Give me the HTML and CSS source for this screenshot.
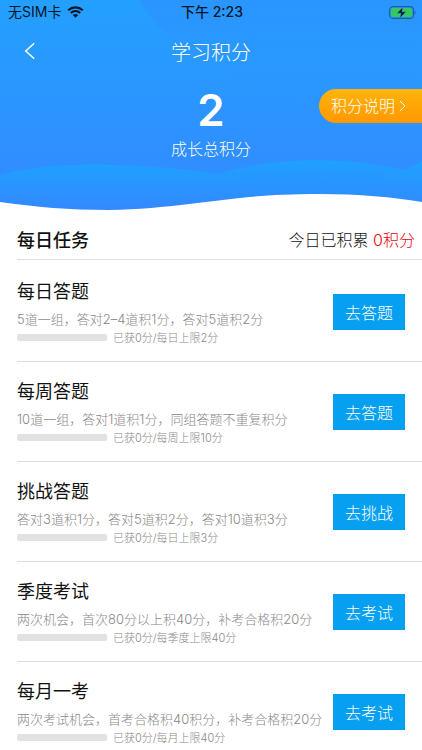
FILE: index.html
```html
<!DOCTYPE html>
<html lang="zh-CN">
<head>
<meta charset="utf-8">
<meta name="viewport" content="width=device-width, initial-scale=1">
<title>学习积分</title>
<link rel="stylesheet" href="styles.css">
</head>
<body>
<header class="hero">
  <svg class="hero-bg" viewBox="0 0 422 219" preserveAspectRatio="none" aria-hidden="true">
    <defs>
      <linearGradient id="sky" x1="0" y1="0" x2="0" y2="1">
        <stop offset="0" stop-color="#23a0ff"/>
        <stop offset="0.8" stop-color="#318dff"/>
        <stop offset="1" stop-color="#318dff"/>
      </linearGradient>
      <linearGradient id="glow" x1="0" y1="0" x2="0" y2="1">
        <stop offset="0" stop-color="#2a95ff"/>
        <stop offset="0.5" stop-color="#2899ff"/>
        <stop offset="1" stop-color="#2d94ff"/>
      </linearGradient>
      <linearGradient id="wave" x1="0" y1="0" x2="0" y2="1">
        <stop offset="0" stop-color="#1da2ff"/>
        <stop offset="1" stop-color="#3488ff"/>
      </linearGradient>
    </defs>
    <path d="M0 0H422V219H0Z" fill="url(#sky)"/>
    <path d="M139 0C152 24 174 43 204 64C250 96 310 112 422 117V0Z" fill="url(#glow)"/>
    <path d="M210 176C275 156 345 156 405 170L422 174V200H210Z" fill="url(#wave)"/>
    <path d="M0 175C58 160 125 164 190 170C245 177 285 184 325 184C370 182 400 174 422 161V211H0Z" fill="url(#wave)"/>
    <path d="M0 202C35 207 70 210 108 210C195 208 225 194 318 194C360 194 392 197 422 202V219H0Z" fill="#fff"/>
  </svg>

  <div class="status">
    <span class="carrier">无SIM卡
      <svg width="17" height="12" viewBox="0 0 17 12" aria-hidden="true">
        <path d="M1.2 4.3C5.4.5 11.6.5 15.8 4.3M3.8 7C6.5 4.6 10.5 4.6 13.2 7" fill="none" stroke="#071727" stroke-width="2.2"/>
        <path d="M5.8 9C7.4 7.6 9.6 7.6 11.2 9L8.5 11.8Z" fill="#071727"/>
      </svg>
    </span>
    <time class="clock">下午 2:23</time>
    <span class="battery">
      <svg width="27" height="13" viewBox="0 0 27 13" aria-label="充电中" role="img">
        <rect x="0.6" y="0.6" width="23.8" height="11.8" rx="3.4" fill="none" stroke="#1c609b" stroke-width="1.1"/>
        <rect x="2" y="2" width="21" height="9" rx="2" fill="#35c95b"/>
        <path d="M25.5 4.4C27 5 27 8 25.5 8.6Z" fill="#1c609b"/>
        <path d="M14 0.8L8 7.2H12L10.8 12.2L17 5.8H13Z" fill="#071727" stroke="#309fe0" stroke-width="0.6"/>
      </svg>
    </span>
  </div>

  <nav class="nav">
    <button class="back" type="button" aria-label="返回">
      <svg width="12" height="18" viewBox="0 0 12 18" aria-hidden="true"><path d="M10.2 1.2L1.8 9L10.2 16.8" fill="none" stroke="#fff" stroke-width="1.5"/></svg>
    </button>
    <h1 class="title">学习积分</h1>
  </nav>

  <div class="score">
    <strong class="score-value">2</strong>
    <span class="score-label">成长总积分</span>
    <a class="rules" href="#rules">积分说明
      <svg width="7" height="12" viewBox="0 0 7 12" aria-hidden="true"><path d="M1 1L6 6L1 11" fill="none" stroke="#fff" stroke-width="1"/></svg>
    </a>
  </div>
</header>

<main class="tasks">
  <div class="tasks-head">
    <h2 class="tasks-title">每日任务</h2>
    <p class="today">今日已积累 <span class="today-points">0积分</span></p>
  </div>
  <ul class="list">
    <li class="task">
      <div class="info">
        <h3 class="name">每日答题</h3>
        <p class="desc">5道一组，答对2–4道积1分，答对5道积2分</p>
        <div class="progress"><span class="bar"></span><span>已获0分/每日上限2分</span></div>
      </div>
      <button class="go" type="button">去答题</button>
    </li>
    <li class="task">
      <div class="info">
        <h3 class="name">每周答题</h3>
        <p class="desc">10道一组，答对1道积1分，同组答题不重复积分</p>
        <div class="progress"><span class="bar"></span><span>已获0分/每周上限10分</span></div>
      </div>
      <button class="go" type="button">去答题</button>
    </li>
    <li class="task">
      <div class="info">
        <h3 class="name">挑战答题</h3>
        <p class="desc">答对3道积1分，答对5道积2分，答对10道积3分</p>
        <div class="progress"><span class="bar"></span><span>已获0分/每日上限3分</span></div>
      </div>
      <button class="go" type="button">去挑战</button>
    </li>
    <li class="task">
      <div class="info">
        <h3 class="name">季度考试</h3>
        <p class="desc">两次机会，首次80分以上积40分，补考合格积20分</p>
        <div class="progress"><span class="bar"></span><span>已获0分/每季度上限40分</span></div>
      </div>
      <button class="go" type="button">去考试</button>
    </li>
    <li class="task">
      <div class="info">
        <h3 class="name">每月一考</h3>
        <p class="desc">两次考试机会，首考合格积40积分，补考合格积20分</p>
        <div class="progress"><span class="bar"></span><span>已获0分/每月上限40分</span></div>
      </div>
      <button class="go" type="button">去考试</button>
    </li>
  </ul>
</main>
</body>
</html>
```
FILE: styles.css
```css
* {
  box-sizing: border-box;
  margin: 0;
  padding: 0;
}

body {
  background: #fff;
  color: #111;
  font-family: Inter, "Noto Sans CJK SC", sans-serif;
  font-size: 16px;
  font-weight: 300;
}

h1, h2, h3 {
  font-weight: 400;
}

button {
  border: 0;
  font: inherit;
  cursor: pointer;
}

svg {
  display: block;
}

/* Header */
.hero {
  position: relative;
  padding-bottom: 55px;
  color: #fff;
}

.hero-bg {
  position: absolute;
  inset: 0;
  z-index: -1;
  width: 100%;
  height: 100%;
}

.status {
  display: grid;
  grid-template-columns: 1fr auto 1fr;
  align-items: center;
  height: 24px;
  padding: 0 6px 0 8px;
  color: #071727;
  font-size: 14px;
  font-weight: 400;
  line-height: 24px;
}

.carrier {
  display: flex;
  align-items: center;
  gap: 6px;
}

.clock {
  font-weight: 500;
}

.battery {
  justify-self: end;
}

.nav {
  display: grid;
  grid-template-columns: 60px 1fr 60px;
  align-items: center;
  height: 54px;
}

.back {
  display: flex;
  justify-content: center;
  padding: 8px;
  background: none;
}

.title {
  font-size: 20px;
  font-weight: 300;
  text-align: center;
}

.score {
  position: relative;
  display: flex;
  flex-direction: column;
  align-items: center;
  padding-top: 8px;
}

.score-value {
  font-size: 44px;
  font-weight: 600;
  line-height: 48px;
}

.score-label {
  line-height: 30px;
}

.rules {
  position: absolute;
  top: 11px;
  right: 0;
  display: flex;
  align-items: center;
  gap: 4px;
  height: 34px;
  padding: 0 16px 0 12px;
  border-radius: 17px 0 0 17px;
  background: linear-gradient(#ffb40a, #ff9800);
  color: #fff;
  line-height: 32px;
  text-decoration: none;
}

/* Task list */
.tasks {
  padding-left: 17px;
}

.tasks-head {
  display: flex;
  align-items: center;
  justify-content: space-between;
  height: 41px;
  padding-right: 7px;
  border-bottom: 1px solid #ddd;
}

.tasks-title {
  font-size: 18px;
  font-weight: 500;
}

.today-points {
  color: #e60012;
}

.list {
  padding-top: 2px;
  list-style: none;
}

.task {
  display: flex;
  align-items: center;
  justify-content: space-between;
  height: 100px;
  padding-right: 17px;
  border-bottom: 1px solid #ddd;
}

.info {
  min-width: 0;
  padding-bottom: 2px;
}

.name {
  font-size: 18px;
  line-height: 32px;
}

.desc {
  color: #888;
  font-size: 13px;
  line-height: 22px;
  white-space: nowrap;
}

.progress {
  display: flex;
  align-items: center;
  gap: 6px;
  color: #888;
  font-size: 11px;
  line-height: 16px;
}

.bar {
  width: 90px;
  height: 7px;
  border-radius: 2px;
  background: #e2e2e5;
}

.go {
  flex: none;
  width: 72px;
  height: 36px;
  background: #079ff0;
  color: #fff;
}
```
